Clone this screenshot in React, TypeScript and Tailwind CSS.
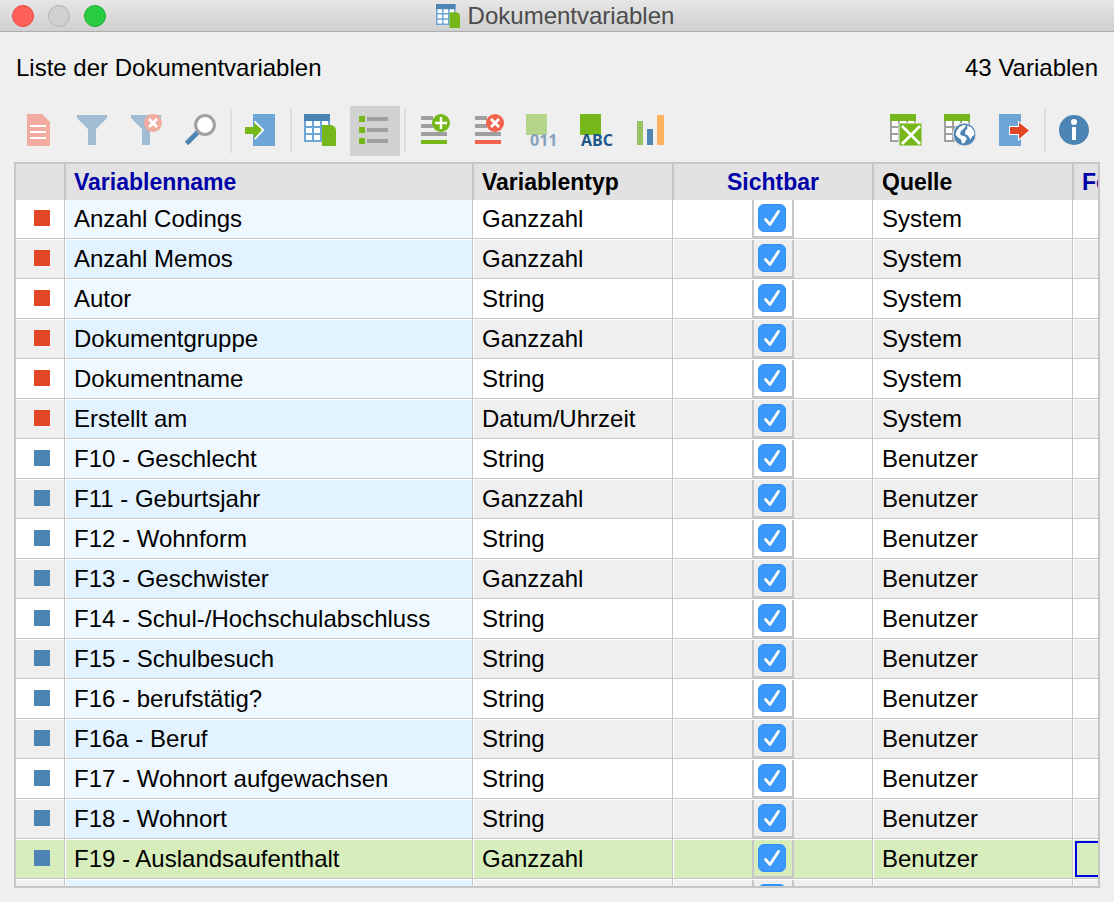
import type { ReactNode } from 'react'

type Source = 'System' | 'Benutzer'

interface Variable {
  name: string
  type: string
  source: Source
}

const VARIABLES: Variable[] = [
  { name: 'Anzahl Codings', type: 'Ganzzahl', source: 'System' },
  { name: 'Anzahl Memos', type: 'Ganzzahl', source: 'System' },
  { name: 'Autor', type: 'String', source: 'System' },
  { name: 'Dokumentgruppe', type: 'Ganzzahl', source: 'System' },
  { name: 'Dokumentname', type: 'String', source: 'System' },
  { name: 'Erstellt am', type: 'Datum/Uhrzeit', source: 'System' },
  { name: 'F10 - Geschlecht', type: 'String', source: 'Benutzer' },
  { name: 'F11 - Geburtsjahr', type: 'Ganzzahl', source: 'Benutzer' },
  { name: 'F12 - Wohnform', type: 'String', source: 'Benutzer' },
  { name: 'F13 - Geschwister', type: 'Ganzzahl', source: 'Benutzer' },
  { name: 'F14 - Schul-/Hochschulabschluss', type: 'String', source: 'Benutzer' },
  { name: 'F15 - Schulbesuch', type: 'String', source: 'Benutzer' },
  { name: 'F16 - berufstätig?', type: 'String', source: 'Benutzer' },
  { name: 'F16a - Beruf', type: 'String', source: 'Benutzer' },
  { name: 'F17 - Wohnort aufgewachsen', type: 'String', source: 'Benutzer' },
  { name: 'F18 - Wohnort', type: 'String', source: 'Benutzer' },
  { name: 'F19 - Auslandsaufenthalt', type: 'Ganzzahl', source: 'Benutzer' },
]

const SELECTED = 16

function Icon({ children }: { children: ReactNode }) {
  return (
    <svg viewBox="0 0 32 32" className="h-8 w-8 overflow-visible" aria-hidden="true">
      {children}
    </svg>
  )
}

function CircleBadge({ color, kind }: { color: string; kind: 'plus' | 'cross' }) {
  return (
    <>
      <circle cx="22" cy="9" r="9" fill={color} />
      <path
        d={kind === 'plus' ? 'M22 3v12M16 9h12' : 'M18 5l8 8M26 5l-8 8'}
        stroke="#fff"
        strokeWidth={kind === 'plus' ? 2.4 : 2.8}
      />
    </>
  )
}

function Grid({ head, body }: { head: string; body: string }) {
  return (
    <>
      <path d="M-1 0h26v28h-26z" fill={body} />
      <path d="M-1 0h26v7h-26z" fill={head} />
      <path
        d="M1 7h6v5h-6zM9 7h6v5h-6zM17 7h6v5h-6zM1 14h6v5h-6zM9 14h6v5h-6zM17 14h6v5h-6zM1 21h6v5h-6zM9 21h6v5h-6zM17 21h6v5h-6z"
        fill="#fff"
      />
    </>
  )
}

function TableDocDrawing() {
  return (
    <>
      <Grid head="#4c84b3" body="#6ca5d6" />
      <path d="M17 11h9q5 1 5 6v15h-14z" fill="#76b81a" />
    </>
  )
}

const FUNNEL = 'M0 1h30v3L19 15v16h-8V15L0 4z'

function Lines({ last }: { last: string }) {
  return (
    <>
      <path d="M2 2h12v4H2zM2 10h12v4H2zM2 18h26v4H2z" fill="#9f9f9f" />
      <path d="M2 26h26v4H2z" fill={last} />
    </>
  )
}

function ToolButton({ label, active, children }: { label: string; active?: boolean; children: ReactNode }) {
  return (
    <button
      type="button"
      aria-label={label}
      aria-pressed={active}
      className={`flex h-[50px] w-[50px] shrink-0 items-center justify-center pb-0.5 ${active ? 'bg-[#d1d1d1]' : ''}`}
    >
      <Icon>{children}</Icon>
    </button>
  )
}

function Separator() {
  return <div className="h-11 w-0.5 shrink-0 bg-[#dedede]" />
}

function TitleBar() {
  return (
    <header className="flex h-8 shrink-0 items-center border-b border-[#adadad] bg-linear-to-b from-[#e6e6e6] to-[#d0d0d0] px-3">
      <div className="flex flex-1 gap-3.5">
        <button type="button" aria-label="Schließen" className="h-[22px] w-[22px] rounded-full border border-[#e2493f] bg-[#ff6158]" />
        <button type="button" aria-label="Minimieren" className="h-[22px] w-[22px] rounded-full border border-[#b4b4b4] bg-[#d0d0d0]" />
        <button type="button" aria-label="Vergrößern" className="h-[22px] w-[22px] rounded-full border border-[#1fae33] bg-[#28cd41]" />
      </div>
      <div className="flex items-center gap-2 pr-1">
        <svg viewBox="-1 0 32 32" className="h-6 w-6" aria-hidden="true">
          <TableDocDrawing />
        </svg>
        <h1 className="text-[24px] leading-8 text-[#4b4b4b]">Dokumentvariablen</h1>
      </div>
      <div className="flex-1" />
    </header>
  )
}

function Toolbar() {
  return (
    <div className="flex shrink-0 items-center justify-between px-3.5" role="toolbar">
      <div className="flex items-center gap-1">
        <ToolButton label="Dokument">
          <path d="M4 0h15l8 8v24H4z" fill="#f1ac9f" />
          <path d="M7 11h16v2H7zM7 17h16v2H7zM7 23h16v2H7z" fill="#fff" />
        </ToolButton>
        <ToolButton label="Filter">
          <path d={FUNNEL} fill="#a2bcd4" />
        </ToolButton>
        <ToolButton label="Filter zurücksetzen">
          <path d={FUNNEL} fill="#a2bcd4" />
          <CircleBadge color="#f1ac9f" kind="cross" />
        </ToolButton>
        <ToolButton label="Suchen">
          <path d="M1.500 29.500L13 18" stroke="#4c84b3" strokeWidth="4.800" />
          <circle cx="20" cy="11" r="9.400" fill="#fff" stroke="#a0a0a0" strokeWidth="3" />
        </ToolButton>
        <Separator />
        <ToolButton label="Importieren">
          <path d="M8 0h22v32H8z" fill="#6ca5d6" />
          <path d="M9.500 7.500L18 16l-8.500 9" fill="none" stroke="#fff" strokeWidth="2" />
          <path d="M0 13h9V8.500L17 16l-8 8.500V20H0z" fill="#76b81a" />
        </ToolButton>
        <Separator />
        <ToolButton label="Dateneditor">
          <TableDocDrawing />
        </ToolButton>
        <ToolButton label="Variablenliste" active>
          <path d="M0 2h6v6H0zM0 13h6v6H0zM0 24h6v6H0z" fill="#76b81a" />
          <path d="M8 3h21v4H8zM8 14h21v4H8zM8 25h21v4H8z" fill="#9f9f9f" />
        </ToolButton>
        <Separator />
        <ToolButton label="Neue Variable">
          <Lines last="#76b81a" />
          <CircleBadge color="#76b81a" kind="plus" />
        </ToolButton>
        <ToolButton label="Variable löschen">
          <Lines last="#f0624c" />
          <CircleBadge color="#f0624c" kind="cross" />
        </ToolButton>
        <ToolButton label="In Ganzzahl umwandeln">
          <path d="M-1 0h21v21H-1z" fill="#b3d68b" />
          <text x="3" y="32" fill="#85a2bc" className="font-['Open_Sans',sans-serif] text-[16px] font-bold">011</text>
        </ToolButton>
        <ToolButton label="In Text umwandeln">
          <path d="M-1 0h21v21H-1z" fill="#76b81a" />
          <text x="0" y="32" fill="#1c578a" className="font-['Open_Sans',sans-serif] text-[16px] font-bold">ABC</text>
        </ToolButton>
        <ToolButton label="Statistik">
          <path d="M2 7h6v24H2z" fill="#98c264" />
          <path d="M12 15h6v16h-6z" fill="#4c84b3" />
          <path d="M22 1h7v30h-7z" fill="#ffb05f" />
        </ToolButton>
      </div>
      <div className="flex items-center gap-1">
        <ToolButton label="Als Excel öffnen">
          <Grid head="#76b81a" body="#a0a0a0" />
          <path d="M8 9h23v23H8z" fill="#76b81a" stroke="#efefef" />
          <path d="M11 12l18 18M29 12L11 30" stroke="#fff" strokeWidth="2.800" />
        </ToolButton>
        <ToolButton label="Als Webseite öffnen">
          <Grid head="#76b81a" body="#a0a0a0" />
          <circle cx="19.500" cy="20.500" r="11.500" fill="#4c84b3" stroke="#efefef" />
          <path
            d="M10.500 20.500l1-3.500 3-4 4-2h2.500l-1.500 3-3.500 3-1 3 1.500 1.500 3 .5 2.500 2.500-2.500 4.500-2.500.5-1-4-3-2zM22 11.500l4 1.500 3 4 .5 4-2 1-2 3.500-2.500-4-3-1.500.5-3.500 2-2z"
            fill="#fff"
          />
        </ToolButton>
        <ToolButton label="Exportieren">
          <path d="M0 0h22v32H0z" fill="#6ca5d6" />
          <path d="M11 13h9V8.500L30 16.500l-10 8.500V20h-9z" fill="#e04726" stroke="#fff" strokeWidth="2" paintOrder="stroke" />
        </ToolButton>
        <Separator />
        <ToolButton label="Info">
          <circle cx="15" cy="16" r="15" fill="#4c84b3" />
          <circle cx="15" cy="8" r="3" fill="#fff" />
          <path d="M13 13h4v13h-4z" fill="#fff" />
        </ToolButton>
      </div>
    </div>
  )
}

function VisibleCheck({ label }: { label: string }) {
  return (
    <div className="mx-auto flex h-[38px] w-[42px] items-center justify-center border-2 border-t-0 border-[#c6c6c6] pr-0.5">
      <span className="relative block h-7 w-7">
        <input
          type="checkbox"
          defaultChecked
          aria-label={label}
          className="peer block h-7 w-7 appearance-none rounded-md border border-[#b5b5b5] bg-white checked:border-[#2f8ffa] checked:bg-[#3b99fc]"
        />
        <svg
          viewBox="0 0 28 28"
          fill="none"
          className="pointer-events-none absolute inset-0 hidden h-7 w-7 peer-checked:block"
          aria-hidden="true"
        >
          <path d="M7.500 15.500l4.500 5L20.500 7.500" stroke="#fff" strokeWidth="2.800" strokeLinecap="round" strokeLinejoin="round" />
        </svg>
      </span>
    </div>
  )
}

const HEAD = 'border-l-2 border-[#c6c6c6] bg-[#e2e2e2] px-2 font-bold whitespace-nowrap'
const CELL = 'border-t border-l border-[#c6c6c6] p-0 pt-px pl-px shadow-[inset_1px_1px_0_#fff] group-first:border-t-0 group-first:pt-0 group-first:shadow-[inset_1px_0_0_#fff]'

function Row({ variable, index }: { variable?: Variable; index: number }) {
  const selected = index === SELECTED
  const odd = index % 2 === 1
  const bg = selected ? 'bg-[#d7edbc]' : odd ? 'bg-[#efefef]' : 'bg-white'
  const nameBg = selected ? 'bg-[#d7edbc]' : odd ? 'bg-[#e2f2ff]' : 'bg-[#f0f8ff]'

  return (
    <tr className={`group h-10 first:h-[38px] ${bg}`}>
      <td className="border-t border-[#c6c6c6] p-0 pb-px pl-[18px] shadow-[inset_0_1px_0_#fff] group-first:border-t-0 group-first:pb-0.5 group-first:shadow-none">
        {variable && <div className={`h-4 w-4 ${variable.source === 'System' ? 'bg-[#e04726]' : 'bg-[#4c84b3]'}`} />}
      </td>
      <td className={`${CELL} ${nameBg}`}>
        <div className="px-2 whitespace-nowrap">{variable?.name}</div>
      </td>
      <td className={CELL}>
        <div className="px-2">{variable?.type}</div>
      </td>
      <td className={CELL}>
        <VisibleCheck label={variable ? `${variable.name} sichtbar` : 'Sichtbar'} />
      </td>
      <td className={CELL}>
        <div className="px-2">{variable?.source}</div>
      </td>
      <td className={CELL}>
        {selected && (
          <input
            type="text"
            aria-label="Fehlende Werte"
            className="mx-px block h-9 w-[196px] border-2 border-[#0000ee] bg-transparent px-1.5 outline-none"
          />
        )}
      </td>
    </tr>
  )
}

function VariableTable() {
  return (
    <div className="mx-3.5 mt-1.5 mb-3.5 min-h-0 flex-1 overflow-hidden border-2 border-[#c6c6c6] bg-white">
      <table className="w-[1256px] table-fixed border-separate border-spacing-0">
        <colgroup>
          <col className="w-12" />
          <col className="w-[408px]" />
          <col className="w-[200px]" />
          <col className="w-[200px]" />
          <col className="w-[200px]" />
          <col className="w-[200px]" />
        </colgroup>
        <thead className="text-[23px] leading-9">
          <tr className="h-9">
            <th className="bg-[#e2e2e2] p-0" />
            <th className={`${HEAD} text-left text-[#0000a8]`}>Variablenname</th>
            <th className={`${HEAD} text-left`}>Variablentyp</th>
            <th className={`${HEAD} text-center text-[#0000a8]`}>Sichtbar</th>
            <th className={`${HEAD} text-left`}>Quelle</th>
            <th className={`${HEAD} text-left text-[#0000a8]`}>Fehlende Werte</th>
          </tr>
        </thead>
        <tbody>
          {VARIABLES.map((variable, i) => (
            <Row key={variable.name} variable={variable} index={i} />
          ))}
          <Row index={VARIABLES.length} />
        </tbody>
      </table>
    </div>
  )
}

export default function App() {
  return (
    <div className="flex h-screen flex-col overflow-hidden bg-[#efefef] font-['Liberation_Sans',Arial,sans-serif] text-[24px] leading-9 text-black">
      <TitleBar />
      <div className="flex shrink-0 items-center justify-between px-4 pt-[18px] pb-5">
        <h2>Liste der Dokumentvariablen</h2>
        <p>43 Variablen</p>
      </div>
      <Toolbar />
      <VariableTable />
    </div>
  )
}
